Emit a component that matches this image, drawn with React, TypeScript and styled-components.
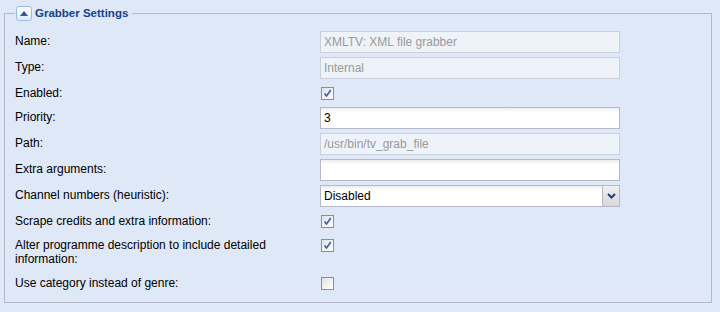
import React from 'react'
import styled, { createGlobalStyle } from 'styled-components'

const GlobalStyle = createGlobalStyle`
  html, body {
    margin: 0;
    padding: 0;
    background: #dfe8f6;
  }
  body {
    font-family: "Liberation Sans", Arial, sans-serif;
    font-size: 12px;
    color: #000;
  }
`

const Page = styled.div`
  width: 720px;
  height: 312px;
  box-sizing: border-box;
  padding: 6px 8px 0 4px;
  background: #dfe8f6;
`

const FieldSet = styled.fieldset`
  margin: 0;
  border: 1px solid #b5b8c8;
  padding: 10px 10px 9px 10px;
  min-width: 0;
`

const Legend = styled.legend`
  display: flex;
  align-items: center;
  gap: 3px;
  padding: 0 4px 0 1px;
  height: 15px;
`

const ToggleButton = styled.button`
  width: 16px;
  height: 15px;
  box-sizing: border-box;
  padding: 0;
  border: 1px solid #99bbe8;
  border-radius: 3px;
  background: linear-gradient(#ffffff, #e3ecf8);
  display: flex;
  align-items: center;
  justify-content: center;
  cursor: pointer;
`

const Title = styled.span`
  font-weight: bold;
  font-size: 11.5px;
  color: #15428b;
  line-height: 15px;
`

const Form = styled.div`
  display: grid;
  grid-template-columns: 305px 300px;
  row-gap: 4px;
  align-items: start;
`

const Label = styled.label`
  padding: 3px 10px 3px 0;
  line-height: 14px;
  color: #000;
`

const TextField = styled.input<{ disabled?: boolean }>`
  box-sizing: border-box;
  width: 300px;
  height: 22px;
  margin: 0;
  padding: 1px 3px;
  font-family: inherit;
  font-size: 12px;
  outline: none;
  border: 1px solid ${p => (p.disabled ? '#c9d0dc' : '#b5b8c8')};
  color: ${p => (p.disabled ? '#9a9a9a' : '#000')};
  background: ${p =>
    p.disabled
      ? '#eef2f9'
      : 'linear-gradient(#ececec 0px, #ffffff 4px, #ffffff 100%)'};
`

const CheckCell = styled.div`
  height: 20px;
  padding: 4px 0 0 1px;
  box-sizing: border-box;
`

const CheckBox = styled.span`
  display: block;
  width: 13px;
  height: 13px;
  box-sizing: border-box;
  border: 1px solid #8e8f8f;
  background: linear-gradient(135deg, #e2e2e2, #ffffff);
`

const Combo = styled.div`
  display: flex;
  width: 300px;
  height: 22px;
  box-sizing: border-box;
  border: 1px solid #b5b8c8;
`

const ComboText = styled.input`
  flex: 1;
  min-width: 0;
  margin: 0;
  padding: 1px 3px;
  border: none;
  outline: none;
  font-family: inherit;
  font-size: 12px;
  color: #000;
  background: linear-gradient(#ececec 0px, #ffffff 4px, #ffffff 100%);
`

const Trigger = styled.span`
  width: 16px;
  border-left: 1px solid #b5b8c8;
  background: linear-gradient(#efefef, #d8d8d8);
  display: flex;
  align-items: center;
  justify-content: center;
`

const Check = ({ checked }: { checked: boolean }) => (
  <CheckCell>
    <CheckBox>
      {checked && (
        <svg width="11" height="11" viewBox="0 0 11 11" style={{ display: 'block' }}>
          <path d="M2.5 5.5 L4.5 8 L8.8 2" fill="none" stroke="#3d5da3" strokeWidth="1.6" />
        </svg>
      )}
    </CheckBox>
  </CheckCell>
)

export default function App() {
  return (
    <>
      <GlobalStyle />
      <Page>
        <FieldSet>
          <Legend>
            <ToggleButton>
              <svg width="8" height="5" viewBox="0 0 8 5">
                <path d="M0 5 L4 0 L8 5 Z" fill="#2a5ba8" />
              </svg>
            </ToggleButton>
            <Title>Grabber Settings</Title>
          </Legend>
          <Form>
            <Label>Name:</Label>
            <TextField disabled value="XMLTV: XML file grabber" readOnly />

            <Label>Type:</Label>
            <TextField disabled value="Internal" readOnly />

            <Label>Enabled:</Label>
            <Check checked />

            <Label>Priority:</Label>
            <TextField defaultValue="3" />

            <Label>Path:</Label>
            <TextField disabled value="/usr/bin/tv_grab_file" readOnly />

            <Label>Extra arguments:</Label>
            <TextField defaultValue="" />

            <Label>Channel numbers (heuristic):</Label>
            <Combo>
              <ComboText value="Disabled" readOnly />
              <Trigger>
                <svg width="9" height="6" viewBox="0 0 9 6">
                  <path d="M1 1 L4.5 4.5 L8 1" fill="none" stroke="#1f3f80" strokeWidth="2" />
                </svg>
              </Trigger>
            </Combo>

            <Label>Scrape credits and extra information:</Label>
            <Check checked />

            <Label>Alter programme description to include detailed information:</Label>
            <Check checked />

            <Label>Use category instead of genre:</Label>
            <Check checked={false} />
          </Form>
        </FieldSet>
      </Page>
    </>
  )
}
